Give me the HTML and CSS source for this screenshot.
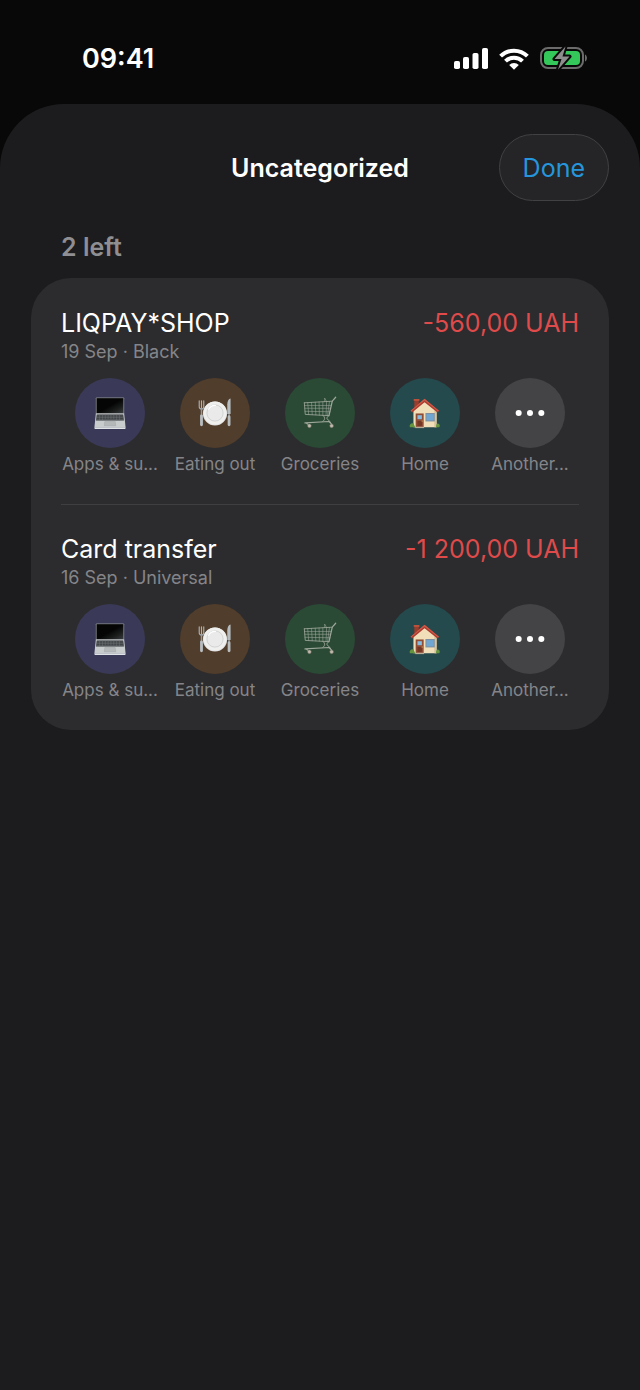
FILE: index.html
```html
<!DOCTYPE html>
<html lang="en">
<head>
  <meta charset="UTF-8">
  <meta name="viewport" content="width=device-width, initial-scale=1.0">
  <title>Uncategorized</title>
  <link rel="stylesheet" href="styles.css">
</head>
<body>
  <!-- Shared category icons -->
  <svg class="hidden" aria-hidden="true">
    <defs>
      <linearGradient id="screen" x1="0" y1="0" x2="1" y2="1">
        <stop offset="0.5" stop-color="#050505"/>
        <stop offset="0.75" stop-color="#1c1e1e"/>
        <stop offset="1" stop-color="#3a3d3e"/>
      </linearGradient>
    </defs>
    <symbol id="icon-laptop" viewBox="0 0 36 36">
      <path d="M4 1.500h28a1 1 0 0 1 1 1V19H3V2.500a1 1 0 0 1 1-1z" fill="#8d9194"/>
      <path d="M3.800 2.300h28.400V18.300H3.800z" fill="url(#screen)"/>
      <path d="M3 18.500h30L34.500 33H1.500z" fill="#c9cccd"/>
      <path d="M4 19.500h28l.8 6.500H3.200z" fill="#34373a"/>
      <path d="M4 21.200h28M3.600 23h28.800M3.400 24.700h29.200" stroke="#8a8d8f" stroke-width=".5"/>
      <path d="M7 19.500v6.500M10 19.500v6.500M13 19.500v5M16 19.500v5M19 19.500v5M22 19.500v5M25 19.500v6.500M28 19.500v6.500" stroke="#75797b" stroke-width=".5"/>
      <path d="M12.500 27h11l.6 4.500H12z" fill="#b5b8b9" stroke="#999d9e" stroke-width=".4"/>
      <path d="M1.500 33h33v1.200a.8.8 0 0 1-.8.8H2.300a.8.8 0 0 1-.8-.8z" fill="#dfe3e5"/>
    </symbol>
    <symbol id="icon-plate" viewBox="0 0 36 36">
      <circle cx="18" cy="18.500" r="12.800" fill="#dedfe0"/>
      <circle cx="18" cy="18" r="12.200" fill="#efefed"/>
      <circle cx="18" cy="18" r="8.600" fill="#e9eae9" stroke="#c9cccc" stroke-width=".8"/>
      <path d="M11 14.500a8 8 0 0 1 8-4.500" fill="none" stroke="#fff" stroke-width="1.200"/>
      <path d="M1.300 5v6.500a2.400 2.400 0 0 0 4.800 0V5M3.700 5v8" fill="none" stroke="#aab0b4" stroke-width="1.200" stroke-linecap="round"/>
      <path d="M3.700 13v9" stroke="#929a9f" stroke-width="1.600"/>
      <path d="M3.700 21v9.500" stroke="#b8bdc0" stroke-width="3" stroke-linecap="round"/>
      <path d="M31 19V9c0-3.500 1.500-6 3.500-6.300V19z" fill="#b6bdc1"/>
      <path d="M32.900 19v3" stroke="#8c9498" stroke-width="1.600"/>
      <path d="M32.900 22v8.500" stroke="#b8bdc0" stroke-width="3" stroke-linecap="round"/>
    </symbol>
    <symbol id="icon-cart" viewBox="0 0 36 36">
      <g fill="none" stroke="#9da69b" stroke-linecap="round" stroke-linejoin="round">
        <path d="M34.600 1.300 31 5.500 27.500 20.800" stroke-width="1.300"/>
        <path d="M1.400 7.200 31 5.500M1.400 7.200l1 12.300 25.100 1.300" stroke-width=".9"/>
        <path d="M1.600 10h28.400M1.900 13h27.500M2.100 16.200l26.600.5M5 7l1 12.700M9 6.800l.8 13M13 6.600l.6 13.400M17 6.400l.3 13.800M21 6.200v14.200M25 6l-.6 14.600M28 5.800 26 20.700" stroke-width=".6"/>
        <path d="M23 6V2.500M23 2.500l2 3.300" stroke-width=".6"/>
        <path d="M27 21c-2.500 1.800-2 3.800.5 4.800l2.800 4M21.500 20.800c2 2 2 4.500-.5 6" stroke-width="1"/>
        <path d="M2 28.500 27.500 27l3 3M3 28.700l4 2.200" stroke-width="1.200"/>
      </g>
      <g fill="#c0b8aa" stroke="#62685f" stroke-width=".5">
        <circle cx="6.800" cy="31.600" r="2"/>
        <circle cx="30.300" cy="31.600" r="2"/>
      </g>
    </symbol>
    <symbol id="icon-house" viewBox="0 0 36 36">
      <path d="M6 3h5v9H6z" fill="#9e3c2b"/>
      <path d="M5.300 2.300h6.400v2H5.300z" fill="#c1523c"/>
      <path d="M5 15 17.500 4 31 15v19H5z" fill="#f1dfba"/>
      <path d="M28.500 13 31 15v19h-2.500z" fill="#d9c39a"/>
      <path d="M17.500 2 1.800 15.500l1.700 2L17.500 6 32 17.500l1.700-2z" fill="#ad3a30"/>
      <path d="M17.500 2 1.800 15.500l.6.7L17.500 4 33 16.200l.7-.7z" fill="#ce5a47"/>
      <path d="M7.500 18.500h9V34h-9z" fill="#914c35"/>
      <path d="M9.500 20.500h5v4.500h-5z" fill="#85bce0"/>
      <path d="M9.500 27h5v5.500h-5z" fill="#743724"/>
      <circle cx="14.800" cy="27" r=".7" fill="#e7bd63"/>
      <path d="M18.500 18h10.500v9.500H18.500z" fill="#7f91a0"/>
      <path d="M19.700 19.200h8.100v7.100h-8.100z" fill="#6fa6d2"/>
      <path d="M7 33.500h10V35H7z" fill="#b9ad98"/>
      <path d="M1 34c-1-3 1-5 4-4.500L7 34zM30.500 34c-.5-2.500 1-4.500 2.500-4 2 .5 2 3 1 4z" fill="#66953f"/>
    </symbol>
    <symbol id="icon-more" viewBox="0 0 36 36">
      <g fill="#fff">
        <circle cx="6" cy="18" r="3.200"/>
        <circle cx="18" cy="18" r="3.200"/>
        <circle cx="30" cy="18" r="3.200"/>
      </g>
    </symbol>
  </svg>

  <div class="status-bar">
    <time class="clock">09:41</time>
    <div class="status-icons">
      <svg width="34" height="22" viewBox="0 0 34 22" fill="#fff">
        <rect x="0" y="13" width="6" height="8" rx="1.800"/>
        <rect x="9" y="9" width="6" height="12" rx="1.800"/>
        <rect x="18.500" y="5" width="6" height="16" rx="1.800"/>
        <rect x="28" y="0" width="6" height="21" rx="1.800"/>
      </svg>
      <svg width="30" height="22" viewBox="0 0 30 22">
        <g fill="none" stroke="#fff" stroke-width="4">
          <path d="M1.600 8.200a19 19 0 0 1 26.800 0"/>
          <path d="M6.500 13.200a12 12 0 0 1 17 0"/>
        </g>
        <path d="M15 21.800l-4.800-4.700a6.800 6.800 0 0 1 9.600 0z" fill="#fff"/>
      </svg>
      <svg width="48" height="26" viewBox="0 0 48 26">
        <rect x="1" y="2" width="42" height="20" rx="7" fill="none" stroke="#6b6b6b" stroke-width="2"/>
        <rect x="4" y="5" width="36" height="14" rx="4" fill="#34c759"/>
        <path d="M45 8.500c2.600 1 2.600 6 0 7z" fill="#6b6b6b"/>
        <path d="M25.500.5 14.500 13h7l-3.500 10.500L29.500 10.500h-7z" fill="#8e8e8e" stroke="#0a0a0a" stroke-width="4" stroke-linejoin="round" paint-order="stroke"/>
      </svg>
    </div>
  </div>

  <main class="sheet">
    <header class="sheet-header">
      <h1>Uncategorized</h1>
      <button class="done" type="button">Done</button>
    </header>
    <h2 class="remaining">2 left</h2>

    <div class="card">
      <section class="transaction">
        <div class="summary">
          <h3>LIQPAY*SHOP</h3>
          <span class="amount">-560,00 UAH</span>
        </div>
        <p class="details">19 Sep · Black</p>
        <div class="categories">
          <button class="category" type="button">
            <span class="circle apps"><svg class="icon"><use href="#icon-laptop"/></svg></span>
            Apps &amp; su...
          </button>
          <button class="category" type="button">
            <span class="circle eating"><svg class="icon"><use href="#icon-plate"/></svg></span>
            Eating out
          </button>
          <button class="category" type="button">
            <span class="circle groceries"><svg class="icon"><use href="#icon-cart"/></svg></span>
            Groceries
          </button>
          <button class="category" type="button">
            <span class="circle home"><svg class="icon"><use href="#icon-house"/></svg></span>
            Home
          </button>
          <button class="category" type="button">
            <span class="circle another"><svg class="icon"><use href="#icon-more"/></svg></span>
            Another...
          </button>
        </div>
      </section>

      <section class="transaction">
        <div class="summary">
          <h3>Card transfer</h3>
          <span class="amount">-1 200,00 UAH</span>
        </div>
        <p class="details">16 Sep · Universal</p>
        <div class="categories">
          <button class="category" type="button">
            <span class="circle apps"><svg class="icon"><use href="#icon-laptop"/></svg></span>
            Apps &amp; su...
          </button>
          <button class="category" type="button">
            <span class="circle eating"><svg class="icon"><use href="#icon-plate"/></svg></span>
            Eating out
          </button>
          <button class="category" type="button">
            <span class="circle groceries"><svg class="icon"><use href="#icon-cart"/></svg></span>
            Groceries
          </button>
          <button class="category" type="button">
            <span class="circle home"><svg class="icon"><use href="#icon-house"/></svg></span>
            Home
          </button>
          <button class="category" type="button">
            <span class="circle another"><svg class="icon"><use href="#icon-more"/></svg></span>
            Another...
          </button>
        </div>
      </section>
    </div>
  </main>
</body>
</html>
```
FILE: styles.css
```css
* {
  box-sizing: border-box;
}

body {
  display: flex;
  flex-direction: column;
  min-height: 100vh;
  margin: 0;
  background: #080808;
  color: #fff;
  font-family: Inter, "Liberation Sans", sans-serif;
}

h1, h2, h3, p {
  margin: 0;
}

button {
  font-family: inherit;
  cursor: pointer;
}

.hidden {
  position: absolute;
  width: 0;
  height: 0;
}

/* Status bar */
.status-bar {
  display: flex;
  justify-content: space-between;
  align-items: center;
  padding: 43px 52px 29px 82px;
}

.clock {
  font-size: 27px;
  font-weight: 600;
  line-height: 32px;
}

.status-icons {
  display: flex;
  align-items: center;
  gap: 11px;
}

/* Sheet */
.sheet {
  flex: 1;
  padding: 30px 31px;
  background: #1c1c1e;
  border-radius: 64px 64px 0 0;
}

.sheet-header {
  display: grid;
  grid-template-columns: 1fr auto 1fr;
  align-items: center;
}

.sheet-header h1 {
  grid-column: 2;
  font-size: 25px;
  font-weight: 600;
  line-height: 32px;
}

.done {
  justify-self: end;
  padding: 17px 23px 16px;
  background: #252527;
  border: 1px solid #414143;
  border-radius: 34px;
  color: #2596dc;
  font-size: 25px;
  line-height: 32px;
}

.remaining {
  margin: 30px 0 15px;
  padding: 0 30px;
  color: #8e8e93;
  font-size: 25px;
  font-weight: 600;
  line-height: 32px;
}

/* Transactions */
.card {
  background: #2c2c2e;
  border-radius: 40px;
}

.transaction {
  margin: 0 30px;
  padding: 30px 0 28px;
}

.transaction + .transaction {
  padding-top: 29px;
  border-top: 1px solid #3f3f42;
}

.summary {
  display: flex;
  justify-content: space-between;
  line-height: 30px;
  font-size: 25px;
}

.summary h3 {
  font-size: 25px;
  font-weight: 400;
}

.amount {
  color: #df4a4b;
}

.details {
  color: #858589;
  font-size: 18px;
  line-height: 28px;
}

.categories {
  display: grid;
  grid-template-columns: repeat(5, 1fr);
  gap: 7px;
  margin-top: 12px;
}

.category {
  display: flex;
  flex-direction: column;
  align-items: center;
  gap: 4px;
  padding: 0;
  background: none;
  border: none;
  color: #858589;
  font-size: 17px;
  line-height: 24px;
  white-space: nowrap;
}

.circle {
  display: flex;
  align-items: center;
  justify-content: center;
  width: 70px;
  height: 70px;
  border-radius: 50%;
}

.icon {
  width: 34px;
  height: 34px;
}

.apps {
  background: #3a3a58;
}

.eating {
  background: #513d2b;
}

.groceries {
  background: #2a4a35;
}

.home {
  background: #244a4d;
}

.home .icon {
  width: 32px;
  height: 32px;
}

.another {
  background: #444446;
}
```
